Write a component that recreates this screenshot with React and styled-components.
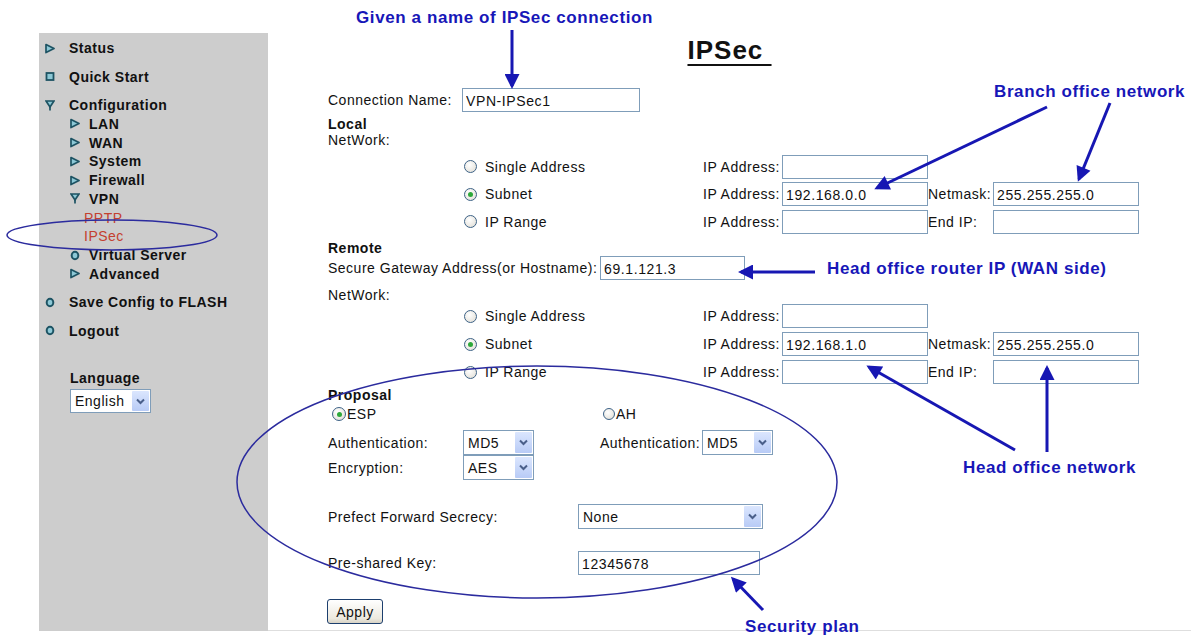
import React from "react";
import styled, { createGlobalStyle } from "styled-components";

const FONT = `"Liberation Sans", Arial, sans-serif`;

const GlobalStyle = createGlobalStyle`
  html, body {
    margin: 0;
    padding: 0;
    background: #fff;
  }
  body {
    font-family: ${FONT};
    color: #111;
  }
`;

const menu = [
  { label: "Status", icon: "play" },
  { label: "Quick Start", icon: "square" },
  {
    label: "Configuration",
    icon: "funnel",
    children: [
      { label: "LAN", icon: "play" },
      { label: "WAN", icon: "play" },
      { label: "System", icon: "play" },
      { label: "Firewall", icon: "play" },
      { label: "VPN", icon: "funnel" },
      { label: "PPTP", leaf: true },
      { label: "IPSec", leaf: true },
      { label: "Virtual Server", icon: "ring" },
      { label: "Advanced", icon: "play" },
    ],
  },
  { label: "Save Config to FLASH", icon: "ring" },
  { label: "Logout", icon: "ring" },
];

const localRows = [
  { opt: "Single Address", on: false, ip: "" },
  { opt: "Subnet", on: true, ip: "192.168.0.0", maskLabel: "Netmask:", mask: "255.255.255.0" },
  { opt: "IP Range", on: false, ip: "", maskLabel: "End IP:", mask: "" },
];

const remoteRows = [
  { opt: "Single Address", on: false, ip: "" },
  { opt: "Subnet", on: true, ip: "192.168.1.0", maskLabel: "Netmask:", mask: "255.255.255.0" },
  { opt: "IP Range", on: false, ip: "", maskLabel: "End IP:", mask: "" },
];

// little teal glyphs of the old router menu
const MenuIcon = ({ kind }) => {
  const fill = "#8cc8d6";
  const stroke = "#1d5363";
  return (
    <svg width="10" height="11" viewBox="0 0 10 11">
      {kind === "play" && (
        <polygon points="1,1.5 9,5.5 1,9.5" fill={fill} stroke={stroke} strokeWidth="1.7" strokeLinejoin="round" />
      )}
      {kind === "square" && (
        <rect x="1.5" y="2" width="7" height="7" fill={fill} stroke={stroke} strokeWidth="1.8" />
      )}
      {kind === "funnel" && (
        <g fill={fill} stroke={stroke} strokeWidth="1.7">
          <polygon points="1,1 9,1 5,7" />
          <line x1="5" y1="7" x2="5" y2="10.5" />
        </g>
      )}
      {kind === "ring" && (
        <ellipse cx="5" cy="5.5" rx="3.3" ry="3.8" fill={fill} stroke={stroke} strokeWidth="2" />
      )}
    </svg>
  );
};

const Chevron = () => (
  <svg width="9" height="7" viewBox="0 0 9 7">
    <path d="M1 1.5 L4.5 5 L8 1.5" fill="none" stroke="#4a5f8a" strokeWidth="2" />
  </svg>
);

const Select = ({ w, h, value }) => (
  <SelectBox $w={w} $h={h}>
    <SelectValue>{value}</SelectValue>
    <DropButton>
      <Chevron />
    </DropButton>
  </SelectBox>
);

const Radio = ({ on, label, gap, size }) => (
  <RadioOption $gap={gap}>
    <RadioDot $on={on} $size={size} />
    <span>{label}</span>
  </RadioOption>
);

const NetworkRows = ({ rows, row, top }) => (
  <NetGrid $row={row} $top={top}>
    {rows.map((r) => (
      <React.Fragment key={r.opt}>
        <span />
        <Radio on={r.on} label={r.opt} gap={8} />
        <FieldText>IP Address:</FieldText>
        <TextInput $w={146} readOnly value={r.ip} />
        <FieldText>{r.maskLabel || ""}</FieldText>
        {r.maskLabel ? <TextInput $w={146} readOnly value={r.mask} /> : <span />}
      </React.Fragment>
    ))}
  </NetGrid>
);

const App = () => {
  return (
    <Page>
      <GlobalStyle />
      <Layout>
        <Sidebar>
          {menu.map((m) => (
            <MenuGroup key={m.label}>
              <MenuItem>
                <MenuIcon kind={m.icon} />
                <span>{m.label}</span>
              </MenuItem>
              {m.children && (
                <SubList>
                  {m.children.map((c) => (
                    <SubItem key={c.label} $leaf={c.leaf}>
                      {!c.leaf && <MenuIcon kind={c.icon} />}
                      <span>{c.label}</span>
                    </SubItem>
                  ))}
                </SubList>
              )}
            </MenuGroup>
          ))}
          <LanguageBlock>
            <LanguageTitle>Language</LanguageTitle>
            <Select w={81} h={24} value="English" />
          </LanguageBlock>
        </Sidebar>

        <Main>
          <TitleRow>
            <Title>IPSec&nbsp;</Title>
          </TitleRow>

          <Form>
            <Row $top={23} $h={24}>
              <FieldLabel $w={134}>Connection Name:</FieldLabel>
              <TextInput $w={178} readOnly value="VPN-IPSec1" />
            </Row>

            <SectionHead $top={4}>Local</SectionHead>
            <Note $top={0} $lh={16}>NetWork:</Note>
            <NetworkRows rows={localRows} row={27.5} top={5} />

            <SectionHead $top={4}>Remote</SectionHead>
            <Row $top={0} $h={25}>
              <FieldLabel $w={272}>Secure Gateway Address(or Hostname):</FieldLabel>
              <TextInput $w={145} readOnly value="69.1.121.3" />
            </Row>
            <Note $top={7.5} $lh={14}>NetWork:</Note>
            <NetworkRows rows={remoteRows} row={28} top={0} />

            <SectionHead $top={1}>Proposal</SectionHead>
            <ProposalGrid>
              <ProposalCol $w={272}>
                <RadioLine $pad={4}>
                  <Radio on label="ESP" gap={1} size={14} />
                </RadioLine>
                <Row $top={8} $h={25}>
                  <FieldLabel $w={135}>Authentication:</FieldLabel>
                  <Select w={71} value="MD5" />
                </Row>
                <Row $top={0} $h={25}>
                  <FieldLabel $w={135}>Encryption:</FieldLabel>
                  <Select w={71} value="AES" />
                </Row>
              </ProposalCol>
              <ProposalCol>
                <RadioLine $pad={3}>
                  <Radio on={false} label="AH" gap={1} size={12} />
                </RadioLine>
                <Row $top={8} $h={25}>
                  <FieldLabel $w={102}>Authentication:</FieldLabel>
                  <Select w={71} value="MD5" />
                </Row>
              </ProposalCol>
            </ProposalGrid>

            <Row $top={24} $h={25}>
              <FieldLabel $w={250}>Prefect Forward Secrecy:</FieldLabel>
              <Select w={185} value="None" />
            </Row>
            <Row $top={22} $h={24}>
              <FieldLabel $w={250}>Pre-shared Key:</FieldLabel>
              <TextInput $w={182} readOnly value="12345678" />
            </Row>
            <Row $top={24} $h={25}>
              <ApplyButton>Apply</ApplyButton>
            </Row>
          </Form>
        </Main>
      </Layout>

      {/* hand drawn notes on top of the screenshot */}
      <Marks width="1191" height="638" viewBox="0 0 1191 638">
        <defs>
          <marker id="head" viewBox="0 0 10 10" refX="8" refY="5" markerWidth="5.5" markerHeight="5" orient="auto">
            <path d="M0 0 L10 5 L0 10 z" fill="#1717b3" />
          </marker>
        </defs>
        <g stroke="#1717b3" strokeWidth="3" markerEnd="url(#head)">
          <line x1="512" y1="30" x2="512" y2="86" />
          <line x1="1047" y1="107" x2="877" y2="188" />
          <line x1="1110" y1="103" x2="1079" y2="179" />
          <line x1="815" y1="272" x2="741" y2="272" />
          <line x1="1015" y1="450" x2="869" y2="367" />
          <line x1="1047" y1="452" x2="1047" y2="368" />
          <line x1="763" y1="610" x2="733" y2="579" />
        </g>
        <g fill="none" stroke="#2b2b9e" strokeWidth="1.5">
          <ellipse cx="537" cy="482" rx="300" ry="116" />
          <ellipse cx="112" cy="235" rx="105" ry="15" />
        </g>
      </Marks>
      <Callout $x={356} $y={8}>Given a name of IPSec connection</Callout>
      <Callout $x={994} $y={82}>Branch office network</Callout>
      <Callout $x={827} $y={259}>Head office router IP (WAN side)</Callout>
      <Callout $x={963} $y={458}>Head office network</Callout>
      <Callout $x={745} $y={617}>Security plan</Callout>
    </Page>
  );
};

const Page = styled.div`
  position: relative;
  width: 1191px;
  height: 638px;
  overflow: hidden;
  background: #fff;
`;

const Layout = styled.div`
  display: flex;
  margin: 33px 0 0 39px;
  height: 598px;
`;

const Sidebar = styled.nav`
  width: 229px;
  flex-shrink: 0;
  background: #cdcdcd;
  padding-top: 5.5px;
  box-sizing: border-box;
`;

const MenuGroup = styled.div`
  margin-bottom: 9.5px;
`;

const MenuItem = styled.div`
  display: flex;
  align-items: center;
  gap: 14px;
  height: 19px;
  padding-left: 6px;
  font: bold 14px ${FONT};
  letter-spacing: 0.5px;
  color: #111;
  white-space: nowrap;
`;

const SubList = styled.div`
  display: flex;
  flex-direction: column;
`;

const SubItem = styled.div`
  display: flex;
  align-items: center;
  gap: 9px;
  height: 18.75px;
  padding-left: ${(p) => (p.$leaf ? 45 : 31)}px;
  font: ${(p) => (p.$leaf ? "normal" : "bold")} 14px ${FONT};
  letter-spacing: 0.5px;
  color: ${(p) => (p.$leaf ? "#c4402f" : "#111")};
  white-space: nowrap;
`;

const LanguageBlock = styled.div`
  margin-top: 29px;
  padding-left: 31px;
`;

const LanguageTitle = styled.div`
  font: bold 14px ${FONT};
  letter-spacing: 0.5px;
  line-height: 19px;
  margin-bottom: 1px;
`;

const Main = styled.main`
  flex: 1;
  border-bottom: 1px solid #dedede;
`;

const TitleRow = styled.div`
  display: flex;
  justify-content: center;
  padding-top: 2px;
  height: 30px;
`;

const Title = styled.h1`
  margin: 0;
  font: bold 26px/30px ${FONT};
  letter-spacing: 1px;
  text-decoration: underline;
  text-decoration-thickness: 2px;
  text-underline-offset: 5px;
  color: #111;
`;

const Form = styled.div`
  padding-left: 60px;
  font: 14px ${FONT};
  letter-spacing: 0.5px;
  color: #111;
`;

const Row = styled.div`
  display: flex;
  align-items: center;
  height: ${(p) => p.$h}px;
  margin-top: ${(p) => p.$top}px;
`;

const FieldLabel = styled.span`
  width: ${(p) => p.$w}px;
  flex-shrink: 0;
  white-space: nowrap;
`;

const FieldText = styled.span`
  white-space: nowrap;
`;

const SectionHead = styled.div`
  margin-top: ${(p) => p.$top}px;
  font-weight: bold;
  line-height: 16px;
`;

const Note = styled.div`
  margin-top: ${(p) => p.$top}px;
  line-height: ${(p) => p.$lh}px;
`;

const NetGrid = styled.div`
  display: grid;
  grid-template-columns: 136px 239px 79px 146px 65px 146px;
  grid-auto-rows: ${(p) => p.$row}px;
  align-items: center;
  margin-top: ${(p) => p.$top}px;
`;

const TextInput = styled.input`
  width: ${(p) => p.$w}px;
  height: 24px;
  box-sizing: border-box;
  border: 1px solid #7f9db9;
  background: #fff;
  padding: 2px 3px 0;
  font: 14px ${FONT};
  letter-spacing: 0.6px;
  color: #111;
  outline: none;
`;

const SelectBox = styled.div`
  display: flex;
  width: ${(p) => p.$w}px;
  height: ${(p) => p.$h || 25}px;
  box-sizing: border-box;
  border: 1px solid #7f9db9;
  background: #fff;
`;

const SelectValue = styled.span`
  flex: 1;
  display: flex;
  align-items: center;
  padding-left: 4px;
  font: 14px ${FONT};
  letter-spacing: 0.5px;
  color: #111;
  white-space: nowrap;
`;

const DropButton = styled.span`
  width: 17px;
  margin: 1px;
  display: flex;
  align-items: center;
  justify-content: center;
  background: linear-gradient(#dbe6fe, #b8cbf6);
  border-radius: 1px;
`;

const RadioOption = styled.span`
  display: inline-flex;
  align-items: center;
  gap: ${(p) => p.$gap}px;
  white-space: nowrap;
`;

const RadioDot = styled.span`
  width: ${(p) => p.$size || 13}px;
  height: ${(p) => p.$size || 13}px;
  box-sizing: border-box;
  border-radius: 50%;
  border: 1px solid #3d6286;
  background: radial-gradient(circle at 40% 35%, #fff, #dedbd2);
  display: inline-flex;
  align-items: center;
  justify-content: center;
  &::after {
    content: "";
    width: 5px;
    height: 5px;
    border-radius: 50%;
    background: ${(p) => (p.$on ? "#2ea83a" : "transparent")};
  }
`;

const ProposalGrid = styled.div`
  display: flex;
`;

const ProposalCol = styled.div`
  width: ${(p) => (p.$w ? `${p.$w}px` : "auto")};
  flex-shrink: 0;
`;

const RadioLine = styled.div`
  margin-top: 3px;
  height: 16px;
  display: flex;
  align-items: center;
  padding-left: ${(p) => p.$pad}px;
`;

const ApplyButton = styled.button`
  margin-left: -1px;
  width: 56px;
  height: 25px;
  border: 1px solid #1d3f6e;
  border-radius: 3px;
  background: linear-gradient(#ffffff, #ece9df 80%, #d8d3c6);
  font: 14px ${FONT};
  letter-spacing: 0.5px;
  color: #111;
  padding: 0;
`;

const Marks = styled.svg`
  position: absolute;
  inset: 0;
  pointer-events: none;
`;

const Callout = styled.div`
  position: absolute;
  left: ${(p) => p.$x}px;
  top: ${(p) => p.$y}px;
  font: bold 17px/20px ${FONT};
  letter-spacing: 0.6px;
  color: #1717b8;
  white-space: nowrap;
`;

export default App;
